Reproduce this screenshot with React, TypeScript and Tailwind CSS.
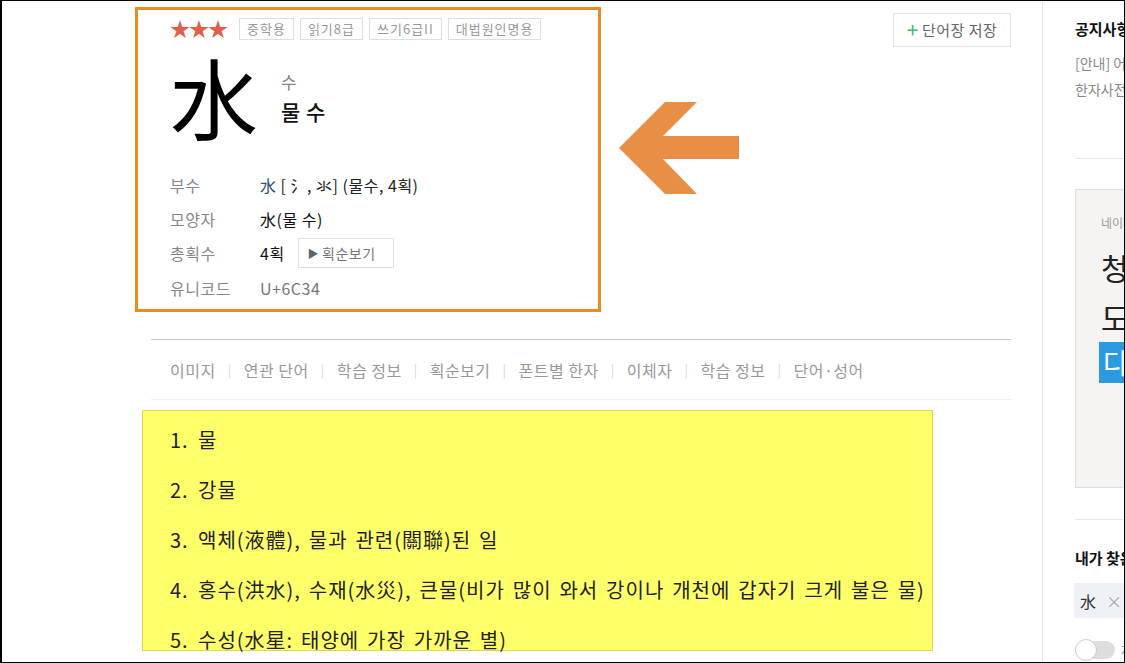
import React from "react";

const font = { fontFamily: '"Noto Sans CJK KR", "Noto Sans", sans-serif' };

const tags = ["중학용", "읽기8급", "쓰기6급II", "대법원인명용"];
const tabs = ["이미지", "연관 단어", "학습 정보", "획순보기", "폰트별 한자", "이체자", "학습 정보", "단어·성어"];
const meanings = [
  "물",
  "강물",
  "액체(液體), 물과 관련(關聯)된 일",
  "홍수(洪水), 수재(水災), 큰물(비가 많이 와서 강이나 개천에 갑자기 크게 불은 물)",
  "수성(水星: 태양에 가장 가까운 별)",
];

function Arrow() {
  return (
    <svg width="120" height="92" viewBox="0 0 120 92" className="shrink-0">
      <polygon points="0,46 46,0 78,0 44,34 120,34 120,57 44,57 78,92 46,92" fill="#e98f45" />
    </svg>
  );
}

function HanjaCard() {
  return (
    <div className="w-[466px] h-[305px] shrink-0 border-[3px] border-[#ec8a23] pl-[32px] pt-[8px]">
      {/* level + tags */}
      <div className="flex items-center h-[22px]">
        <span className="text-[#e0604c] text-[20px] tracking-[-1px] leading-[22px] mr-[12px]">★★★</span>
        {tags.map((t) => (
          <span
            key={t}
            className="mr-[6px] h-[22px] px-[7px] border border-[#dedede] text-[13px] tracking-[1px] text-[#999] leading-[20px]"
          >
            {t}
          </span>
        ))}
      </div>

      {/* character */}
      <div className="flex mt-[20px] h-[96px]">
        <div className="text-[88px] leading-none text-black w-[111px] -mt-[9px]">水</div>
        <div className="flex flex-col pt-[12px]">
          <span className="text-[17px] leading-[20px] text-[#888]">수</span>
          <span className="text-[21px] leading-[24px] mt-[7px] text-[#111] font-medium tracking-[0.5px]">물 수</span>
        </div>
      </div>

      {/* info rows */}
      <div className="mt-[12px] text-[16px] tracking-[0.5px]">
        <div className="flex items-center h-[34px]">
          <span className="w-[90px] text-[#888]">부수</span>
          <span className="text-[#222]">
            <span className="text-[#2b4f6e]">水</span> [ 氵, 氺] (물수, 4획)
          </span>
        </div>
        <div className="flex items-center h-[33px]">
          <span className="w-[90px] text-[#888]">모양자</span>
          <span className="text-[#111]">水(물 수)</span>
        </div>
        <div className="flex items-center h-[36px]">
          <span className="w-[90px] text-[#888]">총획수</span>
          <span className="text-[#111]">4획</span>
          <button className="ml-[13px] h-[30px] w-[96px] border border-[#e2e2e2] flex items-center pl-[9px] text-[14px] tracking-[0.5px] text-[#777]">
            <span className="text-[#5a6470] text-[11px] mr-[3px]">▶</span>획순보기
          </button>
        </div>
        <div className="flex items-center h-[34px]">
          <span className="w-[90px] text-[#888]">유니코드</span>
          <span className="text-[#777]">U+6C34</span>
        </div>
      </div>
    </div>
  );
}

export default function App() {
  return (
    <div
      className="w-[1125px] h-[663px] border border-l-2 border-black bg-white overflow-hidden flex"
      style={font}
    >
      {/* main column */}
      <div className="w-[876px] ml-[133px] shrink-0 pt-[6px]">
        <div className="flex items-start">
          <HanjaCard />
          <div className="ml-[18px] mt-[95px]">
            <Arrow />
          </div>
          <button className="ml-auto mt-[6px] h-[34px] w-[118px] justify-center border border-[#e4e4e4] flex items-center text-[15px] tracking-[0.5px] text-[#666]">
            <span className="text-[#3dbb6e] text-[21px] leading-none mr-[3px] -mt-[2px]">+</span>단어장 저장
          </button>
        </div>

        {/* tabs */}
        <div className="ml-[16px] mt-[27px] border-t border-[#cccccc] border-b border-b-[#eeeeee] h-[61px] flex items-center pl-[19px] text-[16px] tracking-[0.5px] text-[#999]">
          {tabs.map((t, i) => (
            <React.Fragment key={i}>
              {i > 0 && <span className="mx-[12px] text-[#d8d8d8] text-[13px]">|</span>}
              <span>{t}</span>
            </React.Fragment>
          ))}
        </div>

        {/* meanings */}
        <div className="ml-[7px] mt-[10px] w-[791px] h-[241px] bg-[#ffff6a] border border-[#e5d44c] pl-[27px] pt-[4px] text-[20px] tracking-[1px] [word-spacing:2.4px] text-[#222]">
          <ol>
            {meanings.map((m, i) => (
              <li key={i} className="flex leading-[50px] whitespace-nowrap">
                <span className="w-[28px]">{i + 1}.</span>
                <span>{m}</span>
              </li>
            ))}
          </ol>
        </div>
      </div>

      {/* right aside */}
      <div className="ml-[31px] flex-1 border-l border-[#e6e6e6] pl-[32px] overflow-hidden">
        <div className="w-[300px]">
          <div className="pt-[17px] text-[15px] font-bold text-[#111] leading-[22px]">공지사항</div>
          <div className="mt-[10px] text-[14px] text-[#888] leading-[26px]">
            <div>[안내] 어학사전 서비스 안내</div>
            <div>한자사전 이용 안내</div>
          </div>
          <div className="mt-[56px] border-t border-[#e8e8e8]" />
          <div className="mt-[30px] h-[299px] bg-[#f5f4f2] border border-[#dddddd] pl-[25px] pt-[24px]">
            <div className="text-[12px] text-[#999]">네이버 사전</div>
            <div className="mt-[10px] text-[30px] leading-[50px] text-[#222]">청소년 한자</div>
            <div className="text-[30px] leading-[50px] text-[#222]">도전 한자왕</div>
            <div className="-ml-[2px] inline-block bg-[#2a9be0] text-white text-[28px] leading-[41px] px-[4px]">다운로드</div>
          </div>
          <div className="mt-[31px] border-t border-[#e8e8e8]" />
          <div className="mt-[27px] text-[15px] font-bold text-[#111] leading-[22px]">내가 찾은 한자</div>
          <div className="mt-[14px] -ml-[1px] inline-flex items-center h-[35px] bg-[#eef1f5] pl-[6px] pr-[10px] text-[16px] text-[#333]">
            水<span className="ml-[10px] text-[#aaa]">×</span>
          </div>
          <div className="mt-[22px] flex items-center">
            <div className="relative w-[40px] h-[18px] rounded-full bg-[#ddd]">
              <div className="absolute left-0 top-[-2px] w-[22px] h-[22px] rounded-full bg-white border border-[#ccc]" />
            </div>
            <span className="ml-[6px] text-[13px] text-[#999]">자동저장</span>
          </div>
        </div>
      </div>
    </div>
  );
}
